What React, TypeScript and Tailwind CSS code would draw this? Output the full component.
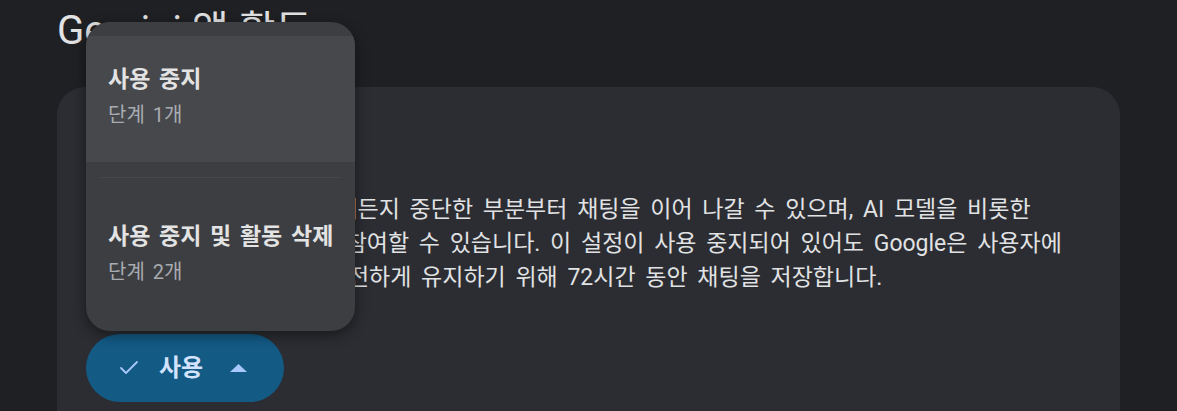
import { Check } from "lucide-react";

const font = "font-['Roboto','Noto_Sans_CJK_KR',sans-serif]";

const bodyLines = [
  "이 설정이 켜져 있으면 언제든지 중단한 부분부터 채팅을 이어 나갈 수 있으며, AI 모델을 비롯한",
  "Google AI 서비스 개선에 참여할 수 있습니다. 이 설정이 사용 중지되어 있어도 Google은 사용자에",
  "게 서비스를 제공하거나 안전하게 유지하기 위해 72시간 동안 채팅을 저장합니다.",
];

function MenuItem({ title, sub, active }: { title: string; sub: string; active?: boolean }) {
  return (
    <div className={active ? "bg-[#46484c] pl-[22px] pt-[30px] pb-[34px]" : "pl-[22px] pt-[45px] pb-[32px]"}>
      <div className="text-[23px] leading-[28px] font-bold text-[#e3e3e3]">{title}</div>
      <div className="mt-[8px] text-[20px] leading-[26px] text-[#a8abb0]">{sub}</div>
    </div>
  );
}

export default function App() {
  return (
    <div className={`h-[411px] overflow-hidden bg-[#1f2023] px-[57px] pt-[7px] ${font}`}>
      <h1 className="text-[40px] leading-[48px] font-normal text-[#e3e3e3]">Gemini 앱 활동</h1>

      <div className="mt-[32px] rounded-[28px] bg-[#2b2d32] pl-[29px] pr-[40px] pt-[106px] pb-[40px] [word-spacing:3px]">
        <p className="text-[23px] leading-[34px] text-[#e1e2e4] [word-spacing:4px]">
          {bodyLines.map((line) => (
            <span key={line} className="block whitespace-nowrap">
              {line}
            </span>
          ))}
        </p>

        <div className="relative mt-[39px] w-fit">
          {/* 펼쳐진 메뉴 */}
          <div className="absolute left-0 bottom-[calc(100%+3px)] w-[269px] overflow-hidden rounded-[24px] bg-[#3c3e42] pt-[14px] pb-[14px] shadow-[0_4px_14px_rgba(0,0,0,0.45)]">
            <MenuItem title="사용 중지" sub="단계 1개" active />
            <div className="pt-[15px]">
              <div className="mx-[14px] h-px bg-[#46484c]" />
            </div>
            <MenuItem title="사용 중지 및 활동 삭제" sub="단계 2개" />
          </div>

          <button className="flex h-[68px] w-[198px] items-center rounded-full bg-[#135a85] pl-[31px]">
            <Check className="h-[24px] w-[24px] text-[#a8c7fa]" strokeWidth={1.8} />
            <span className="ml-[18px] text-[24px] leading-[30px] font-bold text-[#d3e3fd]">사용</span>
            <svg className="ml-[27px]" width="17" height="8" viewBox="0 0 17 8">
              <path d="M8.5 0 L17 8 L0 8 Z" fill="#a8c7fa" />
            </svg>
          </button>
        </div>
      </div>
    </div>
  );
}
